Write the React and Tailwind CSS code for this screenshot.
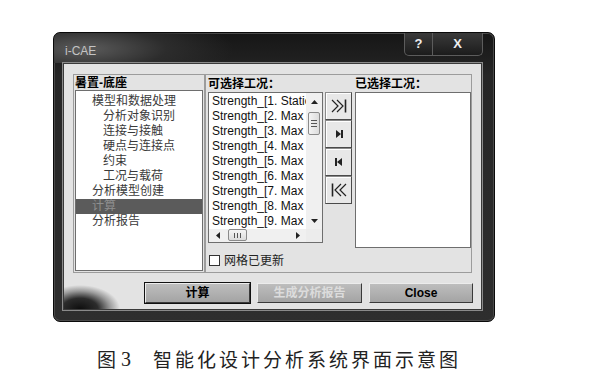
import React from 'react';

const treeItems = [
    { label: '模型和数据处理', level: 1 },
    { label: '分析对象识别', level: 2 },
    { label: '连接与接触', level: 2 },
    { label: '硬点与连接点', level: 2 },
    { label: '约束', level: 2 },
    { label: '工况与载荷', level: 2 },
    { label: '分析模型创建', level: 1 },
    { label: '计算', level: 1, selected: true },
    { label: '分析报告', level: 1 },
];

const loadCases = [
    'Strength_[1. Static]',
    'Strength_[2. Max Braking]',
    'Strength_[3. Max Cornering]',
    'Strength_[4. Max Vertical]',
    'Strength_[5. Max Lateral]',
    'Strength_[6. Max Twist]',
    'Strength_[7. Max Rebound]',
    'Strength_[8. Max Pothole]',
    'Strength_[9. Max Combined]',
];

const Arrow = ({ dir }) => {
    const pts = {
        up: '0,4 3.5,0 7,4',
        down: '0,0 3.5,4 7,0',
        left: '4,0 0,3.5 4,7',
        right: '0,0 4,3.5 0,7',
    }[dir];
    const horiz = dir === 'left' || dir === 'right';
    return (
        <svg width={horiz ? 4 : 7} height={horiz ? 7 : 4} viewBox={horiz ? '0 0 4 7' : '0 0 7 4'}>
            <polygon points={pts} fill="#222" />
        </svg>
    );
};

const TransferIcon = ({ kind }) => {
    if (kind === 'allRight') {
        return (
            <svg width="20" height="16" viewBox="0 0 20 16" fill="none" stroke="#222" strokeWidth="1.2">
                <polyline points="3,2 9,8 3,14" />
                <polyline points="8,2 14,8 8,14" />
                <line x1="16.5" y1="1.5" x2="16.5" y2="14.5" strokeWidth="1.6" />
            </svg>
        );
    }
    if (kind === 'allLeft') {
        return (
            <svg width="20" height="16" viewBox="0 0 20 16" fill="none" stroke="#222" strokeWidth="1.2">
                <line x1="3.5" y1="1.5" x2="3.5" y2="14.5" strokeWidth="1.6" />
                <polyline points="12,2 6,8 12,14" />
                <polyline points="17,2 11,8 17,14" />
            </svg>
        );
    }
    if (kind === 'right') {
        return (
            <svg width="12" height="12" viewBox="0 0 12 12">
                <polygon points="3,2 8,6 3,10" fill="#222" />
                <rect x="8" y="2" width="2" height="8" fill="#222" />
            </svg>
        );
    }
    return (
        <svg width="12" height="12" viewBox="0 0 12 12">
            <rect x="2" y="2" width="2" height="8" fill="#222" />
            <polygon points="9,2 4,6 9,10" fill="#222" />
        </svg>
    );
};

const TreePanel = () => (
    <div className="w-[132px] h-full border border-[#9c9c9c] flex flex-col">
        <div className="h-[15px] leading-[16px] pl-[1px] text-[12px] font-bold text-black">暑置-底座</div>
        <div className="flex-1 mx-[1px] mb-[1px] bg-white border border-[#6e6e6e] pt-[3px]">
            {treeItems.map((item) => (
                <div
                    key={item.label}
                    className={`h-[15px] leading-[15px] text-[12px] whitespace-nowrap ${item.level === 1 ? 'pl-[16px]' : 'pl-[27px]'} ${item.selected ? 'bg-[#5b5b5b] text-[#8e8e8e]' : 'text-[#3a3a3a]'}`}
                >
                    {item.label}
                </div>
            ))}
        </div>
    </div>
);

const CaseList = () => (
    <div className="h-[151px] border border-[#6e6e6e] bg-white flex flex-col">
        <div className="flex flex-1 min-h-0">
            <div className="flex-1 overflow-hidden pt-[1px]">
                {loadCases.map((c) => (
                    <div key={c} className="h-[15px] leading-[15px] pl-[3px] text-[12px] text-[#111] whitespace-nowrap">
                        {c}
                    </div>
                ))}
            </div>
            {/* vertical scrollbar */}
            <div className="w-[16px] bg-[#f0f0f0] flex flex-col items-center">
                <div className="h-[17px] flex items-center justify-center"><Arrow dir="up" /></div>
                <div className="mt-[2px] h-[23px] w-[12px] border border-[#8a8a8a] rounded-[2px] bg-[linear-gradient(90deg,#f4f4f4,#dcdcdc)] flex flex-col items-center justify-center gap-[2px]">
                    <div className="w-[6px] h-px bg-[#555]" />
                    <div className="w-[6px] h-px bg-[#555]" />
                    <div className="w-[6px] h-px bg-[#555]" />
                </div>
                <div className="flex-1" />
                <div className="h-[17px] flex items-center justify-center"><Arrow dir="down" /></div>
            </div>
        </div>
        {/* horizontal scrollbar */}
        <div className="h-[13px] flex bg-[#f0f0f0]">
            <div className="w-[17px] flex items-center justify-center"><Arrow dir="left" /></div>
            <div className="ml-[2px] w-[19px] h-[12px] border border-[#8a8a8a] rounded-[2px] bg-[linear-gradient(#f4f4f4,#dcdcdc)] flex items-center justify-center gap-[2px]">
                <div className="w-px h-[5px] bg-[#555]" />
                <div className="w-px h-[5px] bg-[#555]" />
                <div className="w-px h-[5px] bg-[#555]" />
            </div>
            <div className="flex-1" />
            <div className="w-[17px] flex items-center justify-center"><Arrow dir="right" /></div>
            <div className="w-[16px] bg-[#ececec]" />
        </div>
    </div>
);

const CasePanel = () => (
    <div className="w-[267px] h-full border border-[#9c9c9c] flex">
        <div className="ml-[2px] w-[115px] flex flex-col">
            <div className="h-[17px] leading-[18px] text-[12px] font-bold text-black">可选择工况：</div>
            <CaseList />
            <div className="mt-[10px] ml-[1px] h-[15px] flex items-center">
                <div className="w-[11px] h-[11px] border border-[#333] bg-white" />
                <span className="ml-[4px] text-[12px] text-[#222]">网格已更新</span>
            </div>
        </div>
        <div className="ml-[2px] w-[27px] pt-[17px] flex flex-col">
            {['allRight', 'right', 'left', 'allLeft'].map((k) => (
                <div
                    key={k}
                    className="h-[28px] flex items-center justify-center bg-[#e8e8e8] border border-[#8a8a8a] border-r-[#4a4a4a] border-b-[#4a4a4a] shadow-[inset_1px_1px_0_#fff]"
                >
                    <TransferIcon kind={k} />
                </div>
            ))}
        </div>
        <div className="ml-[3px] w-[116px] flex flex-col">
            <div className="h-[17px] leading-[18px] text-[12px] font-bold text-black">已选择工况：</div>
            <div className="h-[156px] border border-[#6e6e6e] bg-white" />
        </div>
    </div>
);

const DialogButton = ({ children, primary, disabled }) => (
    <div
        className={`h-[20px] flex items-center justify-center text-[12px] font-bold bg-[linear-gradient(#bdbdbd,#a4a4a4)] border border-t-[#ececec] border-l-[#ececec] border-r-[#3a3a3a] border-b-[#3a3a3a] ${primary ? 'outline outline-1 outline-[#111]' : ''} ${disabled ? 'text-[#dcdcdc]' : 'text-black'}`}
    >
        {children}
    </div>
);

const Window = () => (
    <div className="w-[442px] h-[290px] flex flex-col rounded-[7px] border border-[#0a0a0a] bg-[linear-gradient(180deg,#161616_0%,#262626_15%,#2e2e2e_100%)] shadow-[inset_0_0_0_1px_#4a4a4a]">
        {/* title bar */}
        <div className="h-[30px] flex justify-between rounded-t-[7px] bg-[radial-gradient(ellipse_150px_38px_at_30px_16px,#5c5c5c_0%,#2c2c2c_55%,rgba(0,0,0,0)_100%)]">
            <span className="pl-[11px] pt-[9px] text-[12px] text-[#c4c4c4]">i-CAE</span>
            <div className="mr-[11px] h-[23px] flex rounded-b-[5px] border border-t-0 border-[#5c5c5c] bg-[linear-gradient(#3a3a3a,#1c1c1c)] overflow-hidden">
                <div className="w-[27px] flex items-center justify-center text-[#eee] font-bold text-[13px]">?</div>
                <div className="w-[50px] flex items-center justify-center text-[#eee] font-bold text-[13px] border-l border-[#5c5c5c]">X</div>
            </div>
        </div>

        {/* client area */}
        <div className="relative ml-[9px] mr-[12px] h-[247px] border border-[#3a3a3a] outline outline-1 outline-[#8a8a8a] bg-[#e3e3e3] pl-[9px] pt-[10px] overflow-hidden">
            <div className="absolute left-0 bottom-0 w-[80px] h-[44px] bg-[radial-gradient(ellipse_40px_24px_at_16px_44px,#0e0e0e_0%,#2c2c2c_45%,#9a9a9a_75%,rgba(227,227,227,0)_100%)]" />

            <div className="flex h-[199px]">
                <TreePanel />
                <CasePanel />
            </div>

            <div className="relative mt-[10px] ml-[72px] flex gap-[7px]">
                <div className="w-[105px]"><DialogButton primary>计算</DialogButton></div>
                <div className="w-[105px]"><DialogButton disabled>生成分析报告</DialogButton></div>
                <div className="w-[104px]"><DialogButton>Close</DialogButton></div>
            </div>
        </div>
    </div>
);

export default function App() {
    return (
        <div className="w-[604px] h-[388px] bg-white pt-[32px] pl-[53px] font-['Liberation_Sans','Noto_Sans_CJK_SC',sans-serif]">
            <Window />
            <div className="mt-[24px] ml-[44px] h-[26px] flex items-center leading-[26px] text-[19px] text-[#222]">
                <span className="font-['Noto_Sans_CJK_SC',serif]">图</span>
                <span className="ml-[5px] text-[20px] font-['Liberation_Serif',serif]">3</span>
                <span className="ml-[22px] tracking-[3px] font-['Noto_Sans_CJK_SC',serif]">智能化设计分析系统界面示意图</span>
            </div>
        </div>
    );
}
